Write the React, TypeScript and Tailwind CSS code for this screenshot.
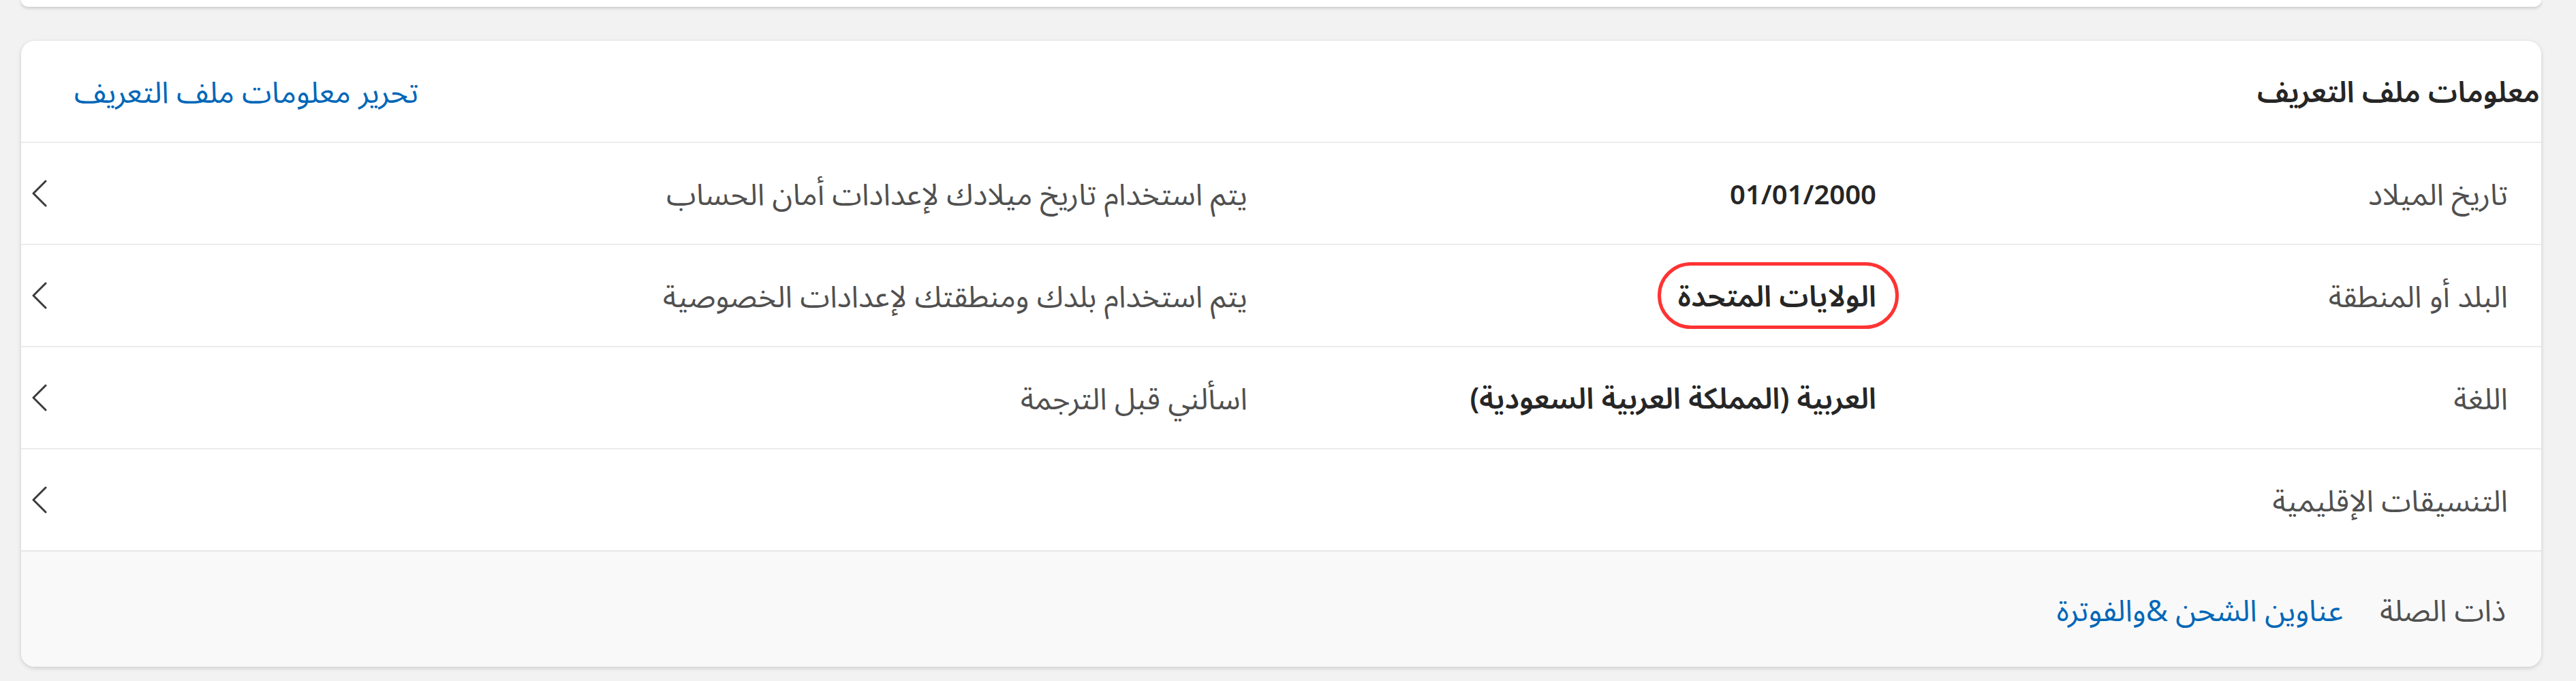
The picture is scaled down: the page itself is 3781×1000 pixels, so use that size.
import React from "react";

const FONT = '"Noto Sans", "Noto Sans Arabic", "DejaVu Sans", sans-serif';

function Chevron() {
  return (
    <svg width="26" height="40" viewBox="0 0 26 40" className="shrink-0">
      <polyline points="22,2 4,20 22,38" fill="none" stroke="#3a3a3a" strokeWidth="3" strokeLinecap="round" strokeLinejoin="round" />
    </svg>
  );
}

type Row = { label: string; value?: React.ReactNode; desc?: string };

export default function App() {
  const rows: Row[] = [
    { label: "تاريخ الميلاد", value: <span dir="ltr" className="text-[40px]">01/01/2000</span>, desc: "يتم استخدام تاريخ ميلادك لإعدادات أمان الحساب" },
    {
      label: "البلد أو المنطقة",
      value: (
        <span className="relative inline-block">
          الولايات المتحدة
          <span className="absolute left-[-30px] right-[-33px] top-[-19px] bottom-[-19px] rounded-full border-[5px] border-[#ff3333]" />
        </span>
      ),
      desc: "يتم استخدام بلدك ومنطقتك لإعدادات الخصوصية",
    },
    { label: "اللغة", value: "العربية (المملكة العربية السعودية)", desc: "اسألني قبل الترجمة" },
    { label: "التنسيقات الإقليمية" },
  ];

  return (
    <div dir="rtl" className="min-h-[1000px] w-full bg-[#f2f2f2] text-[44px] leading-[60px] text-[#505050]" style={{ fontFamily: FONT }}>
      <div className="ml-[31px] mr-[51px] h-[10px] rounded-b-[20px] bg-white shadow-[0_2px_5px_rgba(0,0,0,0.18)]" />

      <div className="ml-[31px] mr-[51px] mt-[50px] overflow-hidden rounded-[20px] bg-white shadow-[0_2px_6px_rgba(0,0,0,0.16)]">
        <div className="flex h-[148px] items-center justify-between pl-[78px] pr-[2px]">
          <div className="text-[43px] font-semibold text-[#262626]">معلومات ملف التعريف</div>
          <a className="text-[#0067b8]">تحرير معلومات ملف التعريف</a>
        </div>

        {rows.map((r) => (
          <div key={r.label} className="flex h-[150px] items-center border-t-[2px] border-[#ececec] pr-[49px] pl-[14px]">
            <div className="w-[927px] shrink-0">{r.label}</div>
            <div className="w-[923px] shrink-0 text-[43px] font-semibold text-[#262626]">{r.value}</div>
            <div className="flex-1">{r.desc}</div>
            <Chevron />
          </div>
        ))}

        <div className="flex h-[171px] items-center gap-[54px] border-t-[2px] border-[#e6e6e6] bg-[#f9f9f9] pr-[52px]">
          <span>ذات الصلة</span>
          <a className="text-[#0067b8]">عناوين الشحن &amp;والفوترة</a>
        </div>
      </div>
    </div>
  );
}
